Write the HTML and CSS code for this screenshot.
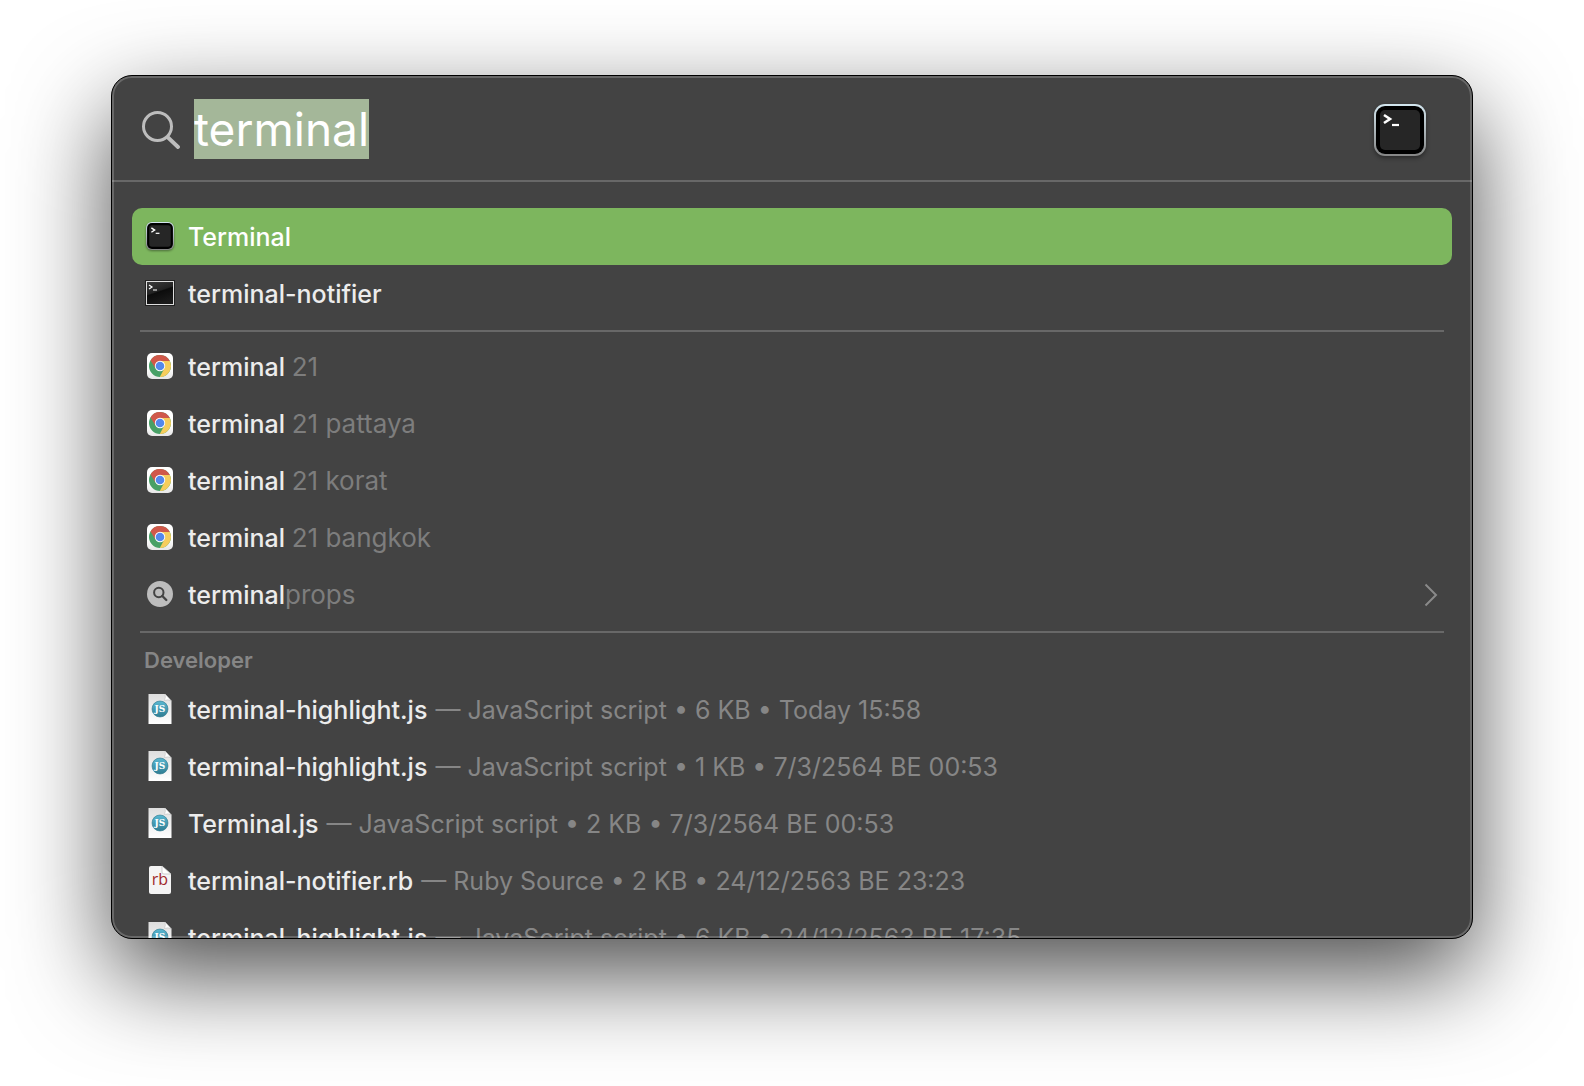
FILE: index.html
```html
<!DOCTYPE html>
<html lang="en">
<head>
<meta charset="utf-8">
<title>Spotlight</title>
<link rel="stylesheet" href="styles.css">
</head>
<body>
<svg class="sprite" aria-hidden="true">
  <defs>
    <linearGradient id="rim" x1="0" y1="0" x2="0" y2="1"><stop offset="0" stop-color="#d3e6ef"/><stop offset="1" stop-color="#858585"/></linearGradient>
    <linearGradient id="sheen" x1="0" y1="0" x2="0.4" y2="1"><stop offset="0" stop-color="#3c3c3c"/><stop offset="0.5" stop-color="#222"/><stop offset="0.55" stop-color="#0c0c0c"/><stop offset="1" stop-color="#1a1a1a"/></linearGradient>
    <linearGradient id="tile" x1="0" y1="0" x2="0" y2="1"><stop offset="0.6" stop-color="#fff"/><stop offset="1" stop-color="#e6e6e6"/></linearGradient>
    <linearGradient id="paper" x1="0" y1="0" x2="0" y2="1"><stop offset="0" stop-color="#dedede"/><stop offset="1" stop-color="#fff"/></linearGradient>
    <linearGradient id="badge" x1="0" y1="0" x2="0" y2="1"><stop offset="0" stop-color="#5ab8d2"/><stop offset="1" stop-color="#2f7d93"/></linearGradient>
  </defs>
  <symbol id="terminal" viewBox="0 0 52 52">
    <rect width="52" height="52" rx="11" fill="url(#rim)"/>
    <rect x="2" y="2" width="48" height="48" rx="9" fill="#000"/>
    <rect x="6" y="6" width="40" height="40" rx="5" fill="#262626"/>
    <path d="M10 11l6 4-6 4" fill="none" stroke="#fff" stroke-width="2.6"/>
    <path d="M18 21h7" stroke="#fff" stroke-width="2.2"/>
  </symbol>
  <symbol id="notifier" viewBox="0 0 30 26">
    <rect width="30" height="26" fill="#222"/>
    <rect x="1.5" y="1.5" width="27" height="23" fill="url(#sheen)" stroke="#ddd"/>
    <path d="M4 5l3 2-3 2M8 10h4" fill="none" stroke="#fff" stroke-width="1.2"/>
  </symbol>
  <symbol id="chrome" viewBox="0 0 26 26">
    <rect width="26" height="26" rx="5" fill="url(#tile)"/>
    <circle cx="13" cy="13" r="11" fill="#48a066"/>
    <path d="M13 8H22.800A11 11 0 0 1 12.800 24L17.300 15.500z" fill="#f6cd5c"/>
    <path d="M3.500 7.500A11 11 0 0 1 22.800 8H13L8.500 15.500z" fill="#d0584a"/>
    <circle cx="13" cy="13" r="5.200" fill="#fff"/>
    <circle cx="13" cy="13" r="4.300" fill="#5488ec"/>
  </symbol>
  <symbol id="suggest" viewBox="0 0 26 26">
    <circle cx="13" cy="13" r="13" fill="#bdbdbd"/>
    <circle cx="11.800" cy="11.500" r="4.700" fill="none" stroke="#444" stroke-width="2"/>
    <path d="M15.300 15l4 4" stroke="#444" stroke-width="2.400" stroke-linecap="round"/>
  </symbol>
  <symbol id="js" viewBox="0 0 24 30">
    <path d="M0.500 0H17l6.500 7v23H0.500z" fill="url(#paper)"/>
    <path d="M17 0l6.500 7q-3.500-2-7-.5 1.500-3.500.5-6.500z" fill="#fff" stroke="#bbb" stroke-width=".5"/>
    <circle cx="12" cy="15" r="8" fill="url(#badge)" stroke="#2c7689" stroke-width=".6"/>
  </symbol>
  <symbol id="rb" viewBox="0 0 24 30">
    <path d="M3 1h11l9 8v18a2 2 0 0 1-2 2H3a2 2 0 0 1-2-2V3a2 2 0 0 1 2-2z" fill="#f4f4f4"/>
    <path d="M14 1l9 8h-7a2 2 0 0 1-2-2z" fill="#fff" stroke="#bbb" stroke-width=".7"/>
  </symbol>
</svg>

<main class="desktop">
  <section class="panel" aria-label="Spotlight search">
    <form class="search">
      <svg class="glass" viewBox="0 0 38 38" aria-hidden="true"><circle cx="15.500" cy="15.500" r="14" fill="none" stroke="#bdbdbd" stroke-width="3"/><path d="M26 26.500l10 9.500" stroke="#bdbdbd" stroke-width="3.800" stroke-linecap="round"/></svg>
      <input class="query" type="text" value="terminal" aria-label="Search" spellcheck="false" autocomplete="off" autofocus>
      <svg class="top-hit" aria-hidden="true"><use href="#terminal"/></svg>
    </form>
    <div class="results">
      <ul class="group">
        <li><button class="row selected" type="button"><svg class="icon app"><use href="#terminal"/></svg><span class="name">Terminal</span></button></li>
        <li><button class="row" type="button"><svg class="icon wide"><use href="#notifier"/></svg><span class="name">terminal-notifier</span></button></li>
      </ul>
      <ul class="group">
        <li><button class="row" type="button"><svg class="icon"><use href="#chrome"/></svg><span class="name">terminal <span class="rest">21</span></span></button></li>
        <li><button class="row" type="button"><svg class="icon"><use href="#chrome"/></svg><span class="name">terminal <span class="rest">21 pattaya</span></span></button></li>
        <li><button class="row" type="button"><svg class="icon"><use href="#chrome"/></svg><span class="name">terminal <span class="rest">21 korat</span></span></button></li>
        <li><button class="row" type="button"><svg class="icon"><use href="#chrome"/></svg><span class="name">terminal <span class="rest">21 bangkok</span></span></button></li>
        <li><button class="row" type="button"><svg class="icon"><use href="#suggest"/></svg><span class="name">terminal<span class="rest">props</span></span><svg class="chevron" viewBox="0 0 14 24"><path d="M1.500 1.500L12 12 1.500 22.500" fill="none" stroke="#8a8a8a" stroke-width="2"/></svg></button></li>
      </ul>
      <h2 class="heading">Developer</h2>
      <ul class="files">
        <li><button class="row" type="button"><svg class="icon file" viewBox="0 0 24 30"><use href="#js" width="24" height="30"/><text x="12" y="18" class="js-label" text-anchor="middle">JS</text></svg><span class="name">terminal-highlight.js</span><span class="info">— JavaScript script • 6 KB • Today 15:58</span></button></li>
        <li><button class="row" type="button"><svg class="icon file" viewBox="0 0 24 30"><use href="#js" width="24" height="30"/><text x="12" y="18" class="js-label" text-anchor="middle">JS</text></svg><span class="name">terminal-highlight.js</span><span class="info">— JavaScript script • 1 KB • 7/3/2564 BE 00:53</span></button></li>
        <li><button class="row" type="button"><svg class="icon file" viewBox="0 0 24 30"><use href="#js" width="24" height="30"/><text x="12" y="18" class="js-label" text-anchor="middle">JS</text></svg><span class="name">Terminal.js</span><span class="info">— JavaScript script • 2 KB • 7/3/2564 BE 00:53</span></button></li>
        <li><button class="row" type="button"><svg class="icon file" viewBox="0 0 24 30"><use href="#rb" width="24" height="30"/><text x="12" y="20" class="rb-label" text-anchor="middle">rb</text></svg><span class="name">terminal-notifier.rb</span><span class="info">— Ruby Source • 2 KB • 24/12/2563 BE 23:23</span></button></li>
        <li><button class="row" type="button"><svg class="icon file" viewBox="0 0 24 30"><use href="#js" width="24" height="30"/><text x="12" y="18" class="js-label" text-anchor="middle">JS</text></svg><span class="name">terminal-highlight.js</span><span class="info">— JavaScript script • 6 KB • 24/12/2563 BE 17:35</span></button></li>
      </ul>
    </div>
  </section>
</main>
<script src="script.js"></script>
</body>
</html>
```
FILE: styles.css
```css
* { box-sizing: border-box; }

body {
  margin: 0;
  background: #fff;
  color: #ececec;
  font-family: Inter, "Liberation Sans", sans-serif;
  font-size: 25px;
}

ul { list-style: none; margin: 0; padding: 0; }

.sprite { position: absolute; width: 0; height: 0; }

.desktop {
  display: flex;
  height: 100vh;
  padding: 75px 111px 147px;
  overflow: hidden;
}

.panel {
  position: relative;
  display: flex;
  flex: 1;
  flex-direction: column;
  min-width: 0;
  overflow: hidden;
  border: 1px solid #000;
  border-radius: 21px;
  background: #434343;
  box-shadow: 0 36px 96px rgba(0, 0, 0, .7);
}

/* Light rim drawn over whatever scrolls beneath it */
.panel::after {
  content: "";
  position: absolute;
  inset: 0;
  border: 2px solid rgba(255, 255, 255, .2);
  border-radius: 20px;
  pointer-events: none;
}

.search {
  display: flex;
  flex: none;
  align-items: center;
  height: 106px;
  padding: 4px 46px 0 30px;
  border-bottom: 2px solid #686868;
}

.glass { flex: none; width: 38px; height: 38px; margin-right: 14px; }

.query {
  flex: 1;
  min-width: 0;
  height: 60px;
  margin-bottom: 2px;
  padding: 0;
  border: 0;
  outline: 0;
  background: none;
  color: #fff;
  font: 400 46px/60px Inter, "Liberation Sans", sans-serif;
  caret-color: transparent;
}

.query::selection { background: #a4b799; color: #fff; }

.top-hit { flex: none; width: 52px; height: 52px; filter: drop-shadow(0 2px 2px rgba(0, 0, 0, .4)); }

.results { padding: 26px 20px 0; min-height: 0; overflow: hidden; }

.group { position: relative; padding-bottom: 16px; }

.group::after {
  content: "";
  display: block;
  height: 2px;
  margin: 8px 8px -10px;
  background: #686868;
}

.row {
  display: flex;
  align-items: center;
  width: 100%;
  height: 57px;
  padding: 0 14px 0 56px;
  border: 0;
  border-radius: 10px;
  background: none;
  color: inherit;
  font: inherit;
  font-weight: 500;
  line-height: 32px;
  text-align: left;
  white-space: pre;
}

.row.selected { background: #7db65e; color: #fff; }

.icon { flex: none; width: 26px; height: 26px; margin: 0 15px 2px -41px; }
.icon.app { width: 28px; height: 28px; margin-left: -42px; margin-right: 14px; filter: drop-shadow(0 1px 1px rgba(0, 0, 0, .4)); }
.icon.wide { width: 30px; height: 26px; margin-left: -43px; margin-right: 13px; }
.icon.file { width: 24px; height: 30px; margin-left: -40px; margin-right: 16px; }

.rest { color: #7d7d7d; font-size: 26px; font-weight: 400; }
.info { margin-left: 8px; color: #868686; font-weight: 400; }

.chevron { width: 14px; height: 24px; margin-left: auto; }

.heading {
  margin: 0;
  padding: 0 12px;
  color: #868686;
  font-size: 22px;
  font-weight: 600;
  line-height: 42px;
}

.js-label { fill: #fff; font: 700 9px "DejaVu Serif", serif; }
.rb-label { fill: #a0282b; font: 400 16px "Open Sans", sans-serif; }
```
FILE: script.js
```js
const query = document.querySelector('.query');
query.focus();
query.select();
```
